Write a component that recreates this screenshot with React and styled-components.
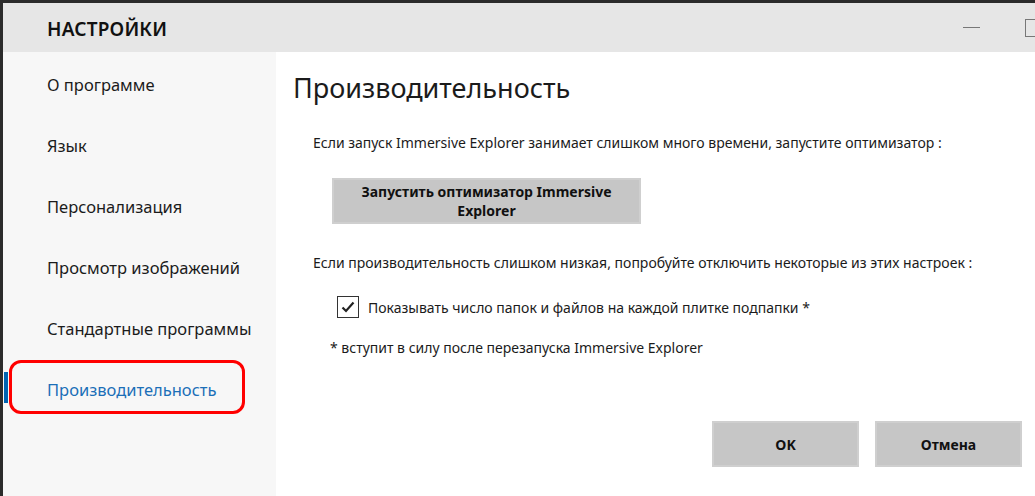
import React from "react";
import styled, { createGlobalStyle } from "styled-components";

const GlobalStyle = createGlobalStyle`
  html, body {
    margin: 0;
    padding: 0;
    overflow: hidden;
    background: #2b2b2b;
  }
  body {
    font-family: "Noto Sans", "Open Sans", sans-serif;
    color: #1b1b1b;
  }
`;

const navItems = [
  "О программе",
  "Язык",
  "Персонализация",
  "Просмотр изображений",
  "Стандартные программы",
  "Производительность",
];

function CheckIcon() {
  return (
    <svg width="14" height="12" viewBox="0 0 14 12">
      <path d="M1.5 6.5 L5 10 L12.5 1.5" fill="none" stroke="#222" strokeWidth="2.2" />
    </svg>
  );
}

export default function App() {
  const selected = 5;

  return (
    <>
      <GlobalStyle />
      <Window>
        <TitleBar>
          <WindowTitle>НАСТРОЙКИ</WindowTitle>
          <Controls>
            <Minimize />
            <Maximize />
          </Controls>
        </TitleBar>

        <Body>
          <Sidebar>
            {navItems.map((item, i) => (
              <NavItem key={item} $active={i === selected}>
                {i === selected && <Highlight />}
                {item}
              </NavItem>
            ))}
          </Sidebar>

          <Content>
            <Heading>Производительность</Heading>
            <Text>
              Если запуск Immersive Explorer занимает слишком много времени, запустите оптимизатор :
            </Text>
            <OptimizeButton>Запустить оптимизатор Immersive Explorer</OptimizeButton>
            <Text $gap={29}>
              Если производительность слишком низкая, попробуйте отключить некоторые из этих настроек :
            </Text>
            <CheckRow>
              <CheckBox>
                <CheckIcon />
              </CheckBox>
              <span>Показывать число папок и файлов на каждой плитке подпапки *</span>
            </CheckRow>
            <Note>* вступит в силу после перезапуска Immersive Explorer</Note>

            <Footer>
              <DialogButton>OK</DialogButton>
              <DialogButton>Отмена</DialogButton>
            </Footer>
          </Content>
        </Body>
      </Window>
    </>
  );
}

const Window = styled.div`
  display: flex;
  flex-direction: column;
  height: 493px;
  margin-top: 3px;
  margin-left: 3px;
  background: #ffffff;
`;

const TitleBar = styled.div`
  display: flex;
  align-items: center;
  justify-content: space-between;
  height: 49px;
  flex-shrink: 0;
  padding-left: 44px;
  background: #e6e6e6;
  overflow: hidden;
`;

const WindowTitle = styled.div`
  font-size: 19px;
  font-weight: 600;
  color: #111;
  letter-spacing: 0.2px;
  margin-top: 2px;
`;

const Controls = styled.div`
  display: flex;
  align-items: center;
  gap: 45px;
  margin-right: -8px;
`;

const Minimize = styled.div`
  width: 17px;
  height: 1px;
  background: #777;
`;

const Maximize = styled.div`
  width: 16px;
  height: 16px;
  border: 1px solid #777;
  margin-top: 1px;
`;

const Body = styled.div`
  display: flex;
  flex: 1;
  min-height: 0;
`;

const Sidebar = styled.nav`
  width: 273px;
  flex-shrink: 0;
  padding-top: 2px;
  background: #f7f7f7;
`;

const NavItem = styled.div`
  position: relative;
  display: flex;
  align-items: center;
  height: 61px;
  padding-left: 44px;
  font-size: 16.5px;
  color: ${(p) => (p.$active ? "#1b6fb8" : "#1b1b1b")};

  &::before {
    content: "";
    display: ${(p) => (p.$active ? "block" : "none")};
    position: absolute;
    left: 1px;
    top: 13px;
    width: 4px;
    height: 31px;
    background: #0063b1;
  }
`;

const Highlight = styled.div`
  position: absolute;
  left: 6px;
  top: 1px;
  width: 230px;
  height: 48px;
  border: 3px solid #ff0000;
  border-radius: 12px;
`;

const Content = styled.main`
  flex: 1;
  display: flex;
  flex-direction: column;
  padding: 17px 13px 29px 17px;
`;

const Heading = styled.h1`
  margin: 0;
  font-size: 27px;
  line-height: 38px;
  font-weight: 400;
  color: #1b1b1b;
`;

const Text = styled.p`
  margin: ${(p) => p.$gap || 26}px 0 0 20px;
  font-size: 14px;
  line-height: 20px;
`;

const OptimizeButton = styled.button`
  width: 309px;
  height: 46px;
  margin: 25px 0 0 39px;
  padding: 0 26px;
  border: 2px solid #cfcfcf;
  background: #c6c6c6;
  font-family: inherit;
  font-size: 14px;
  font-weight: 700;
  line-height: 19px;
  color: #111;
`;

const CheckRow = styled.label`
  display: flex;
  align-items: center;
  gap: 9px;
  margin: 23px 0 0 44px;
  font-size: 14px;
`;

const CheckBox = styled.span`
  display: flex;
  align-items: center;
  justify-content: center;
  width: 20px;
  height: 20px;
  border: 1px solid #333;
  background: #fff;
`;

const Note = styled.p`
  margin: 20px 0 0 37px;
  font-size: 14px;
  line-height: 20px;
`;

const Footer = styled.div`
  display: flex;
  justify-content: flex-end;
  gap: 16px;
  margin-top: auto;
`;

const DialogButton = styled.button`
  width: 147px;
  height: 46px;
  border: 2px solid #cfcfcf;
  background: #c6c6c6;
  font-family: inherit;
  font-size: 14px;
  font-weight: 700;
  color: #111;
`;
